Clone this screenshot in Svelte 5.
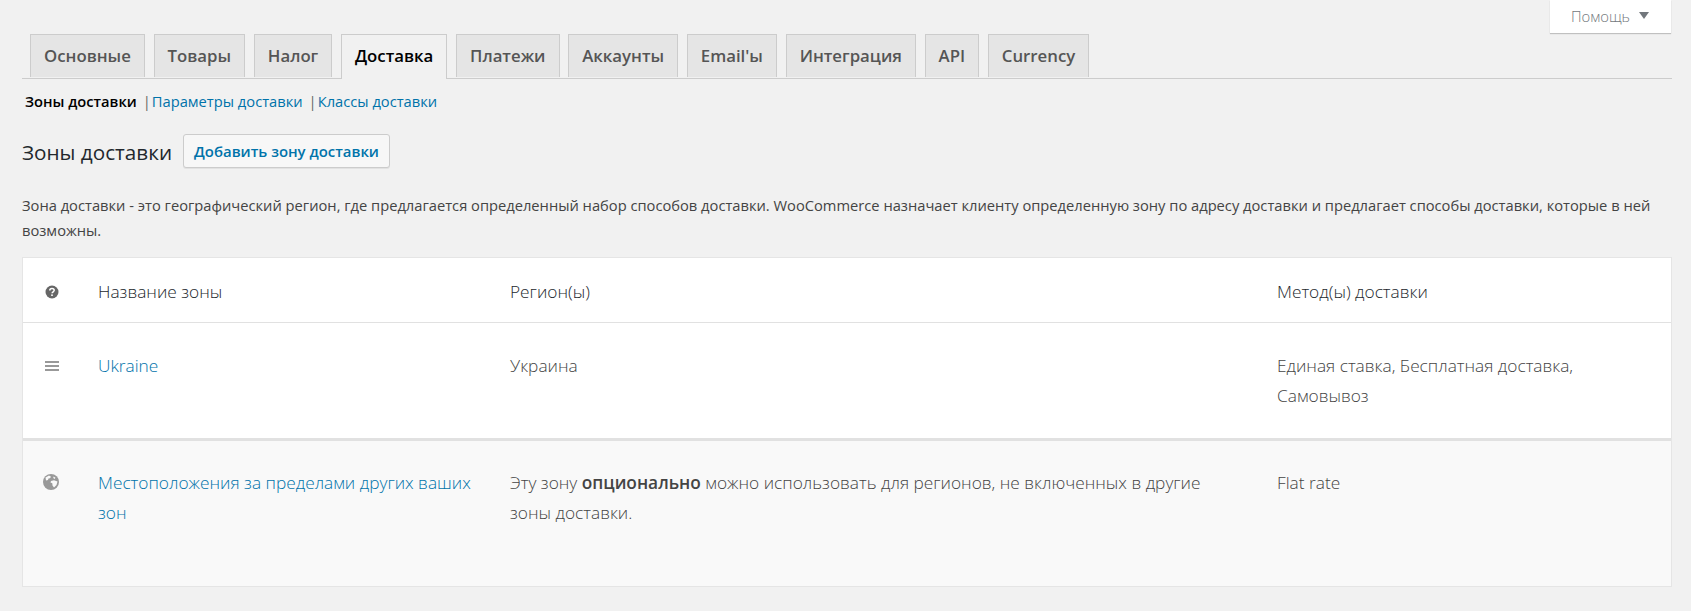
<script lang="ts">
	const tabs = ['Основные', 'Товары', 'Налог', 'Доставка', 'Платежи', 'Аккаунты', "Email'ы", 'Интеграция', 'API', 'Currency'];
	const aktiv = 'Доставка';
</script>

<div class="wrap">
	<button class="hilfe">Помощь <span class="pfeil"></span></button>

	<nav class="tabs">
		{#each tabs as t}
			<a href="#{t}" class="tab" class:aktiv={t === aktiv}>{t}</a>
		{/each}
	</nav>

	<ul class="sub">
		<li><a href="#z" class="current">Зоны доставки</a></li>
		<li><a href="#p">Параметры доставки</a></li>
		<li><a href="#k">Классы доставки</a></li>
	</ul>

	<div class="kopf">
		<h2>Зоны доставки</h2>
		<a href="#neu" class="knopf">Добавить зону доставки</a>
	</div>

	<p class="info">
		Зона доставки - это географический регион, где предлагается определенный набор способов доставки. WooCommerce назначает клиенту определенную зону по адресу доставки и предлагает способы доставки, которые в ней возможны.
	</p>

	<table class="zonen">
		<colgroup>
			<col class="c-icon" />
			<col class="c-name" />
			<col class="c-region" />
			<col />
		</colgroup>
		<thead>
			<tr>
				<th class="icon">
					<svg viewBox="0 0 14 14" width="14" height="14">
						<circle cx="7" cy="7" r="6.5" fill="#666" />
						<path d="M4.8 5.4c0-1.3 1-2 2.2-2s2.2.7 2.2 1.9c0 1.500-2.100 1.500-2.100 3" fill="none" stroke="#fff" stroke-width="1.500" />
						<rect x="6.200" y="9.400" width="1.600" height="1.600" fill="#fff" />
					</svg>
				</th>
				<th>Название зоны</th>
				<th>Регион(ы)</th>
				<th>Метод(ы) доставки</th>
			</tr>
		</thead>
		<tbody>
			<tr class="zeile">
				<td class="icon">
					<svg viewBox="0 0 14 10" width="14" height="10" class="griff">
						<rect y="0" width="14" height="2" fill="#999" />
						<rect y="4" width="14" height="2" fill="#999" />
						<rect y="8" width="14" height="2" fill="#999" />
					</svg>
				</td>
				<td><a href="#ua">Ukraine</a></td>
				<td>Украина</td>
				<td>Единая ставка, Бесплатная доставка, Самовывоз</td>
			</tr>
			<tr class="rest">
				<td class="icon">
					<svg viewBox="0 0 16 16" width="16" height="16" class="globus">
						<circle cx="8" cy="8" r="8" fill="#999" />
						<path d="M2.500 3.500 6 1.500l2 1.200-1 1.600-1.500.3-.5 1.500-2 .4zM8 7l3-.8 3.500 1.300-1 3.500-2.500 2.500-1.500-2-.2-2.300L7.500 8.500zM10.500 2.500l2 1.200-1 1.200-1.200-1z" fill="#f9f9f9" />
					</svg>
				</td>
				<td><a href="#rest">Местоположения за пределами других ваших зон</a></td>
				<td>Эту зону <strong>опционально</strong> можно использовать для регионов, не включенных в другие зоны доставки.</td>
				<td>Flat rate</td>
			</tr>
		</tbody>
	</table>
</div>

<style>
	:global(body) {
		margin: 0;
		background: #f1f1f1;
		font-family: "Open Sans", "Noto Sans", sans-serif;
		font-size: 14px;
		color: #444;
	}
	.wrap {
		position: relative;
		padding: 34px 19px 26px 22px;
	}
	a { color: #0073aa; text-decoration: none; }

	.hilfe {
		position: absolute;
		top: 0;
		right: 20px;
		width: 121px;
		height: 33px;
		background: #fff;
		border: none;
		box-shadow: 0 1px 1px rgba(0, 0, 0, 0.2);
		color: #72777c;
		font-family: inherit;
		font-size: 14.800px;
		font-weight: 300;
		line-height: 31px;
		text-align: left;
		padding: 0 0 0 21px;
		white-space: nowrap;
	}
	.pfeil {
		display: inline-block;
		width: 0;
		height: 0;
		margin-left: 5px;
		border-left: 5px solid transparent;
		border-right: 5px solid transparent;
		border-top: 7px solid #72777c;
		vertical-align: 3px;
	}

	.tabs {
		display: flex;
		gap: 8.700px;
		height: 44px;
		padding-left: 8px;
		border-bottom: 1px solid #ccc;
	}
	.tab {
		box-sizing: border-box;
		height: 43px;
		padding: 0 13px;
		line-height: 41px;
		background: #e5e5e5;
		border: 1px solid #ccc;
		border-bottom: none;
		color: #555;
		font-size: 16.800px;
		font-weight: 600;
		white-space: nowrap;
	}
	.tab.aktiv {
		height: 45px;
		background: #f1f1f1;
		color: #000;
	}

	.sub {
		display: flex;
		list-style: none;
		margin: 0;
		padding: 10px 0 0 3px;
		height: 33px;
		line-height: 24px;
		font-size: 14.700px;
	}
	.sub li + li::before {
		content: '|';
		color: #666;
		margin: 0 1px 0 6px;
	}
	.sub .current { color: #000; font-weight: 600; }

	.kopf {
		display: flex;
		align-items: center;
		gap: 11px;
		margin-top: 12px;
	}
	h2 {
		margin: 0;
		padding-top: 2px;
		font-size: 20.700px;
		font-weight: 400;
		color: #23282d;
	}
	.knopf {
		box-sizing: border-box;
		height: 34px;
		line-height: 32px;
		padding: 0 10px;
		background: #f7f7f7;
		border: 1px solid #ccc;
		border-radius: 3px;
		font-size: 14.900px;
		font-weight: 600;
		box-shadow: 0 1px 0 #e2e2e2;
	}

	.info {
		margin: 25px 0 15px;
		line-height: 25px;
		font-size: 14.700px;
	}

	.zonen {
		width: calc(100% - 2px);
		margin: 0 1px;
		table-layout: fixed;
		border-collapse: collapse;
		background: #fff;
		box-shadow: 0 0 0 1px #e5e5e5;
		font-size: 17.300px;
		font-weight: 300;
	}
	.c-icon { width: 75px; }
	.c-name { width: 412px; }
	.c-region { width: 767px; }
	th, td {
		padding: 27px 20px 27px 0;
		text-align: left;
		vertical-align: top;
		line-height: 30px;
	}
	th {
		padding: 19px 20px 15px 0;
		font-weight: 300;
		color: #23282d;
		border-bottom: 1px solid #e1e1e1;
	}
	td:nth-child(3) { padding-right: 40px; }
	.icon { padding-left: 22px; padding-right: 0; }
	.icon svg { display: block; }
	th.icon svg { margin-top: 8px; }
	.griff { margin-top: 10px; }
	.globus { margin: 6px 0 0 -2px; }
	.zeile td { padding-top: 28px; }
	.rest td {
		background: #f9f9f9;
		border-top: 3px solid #e1e1e1;
		padding-bottom: 58px;
	}
	strong { font-weight: 600; }
</style>
